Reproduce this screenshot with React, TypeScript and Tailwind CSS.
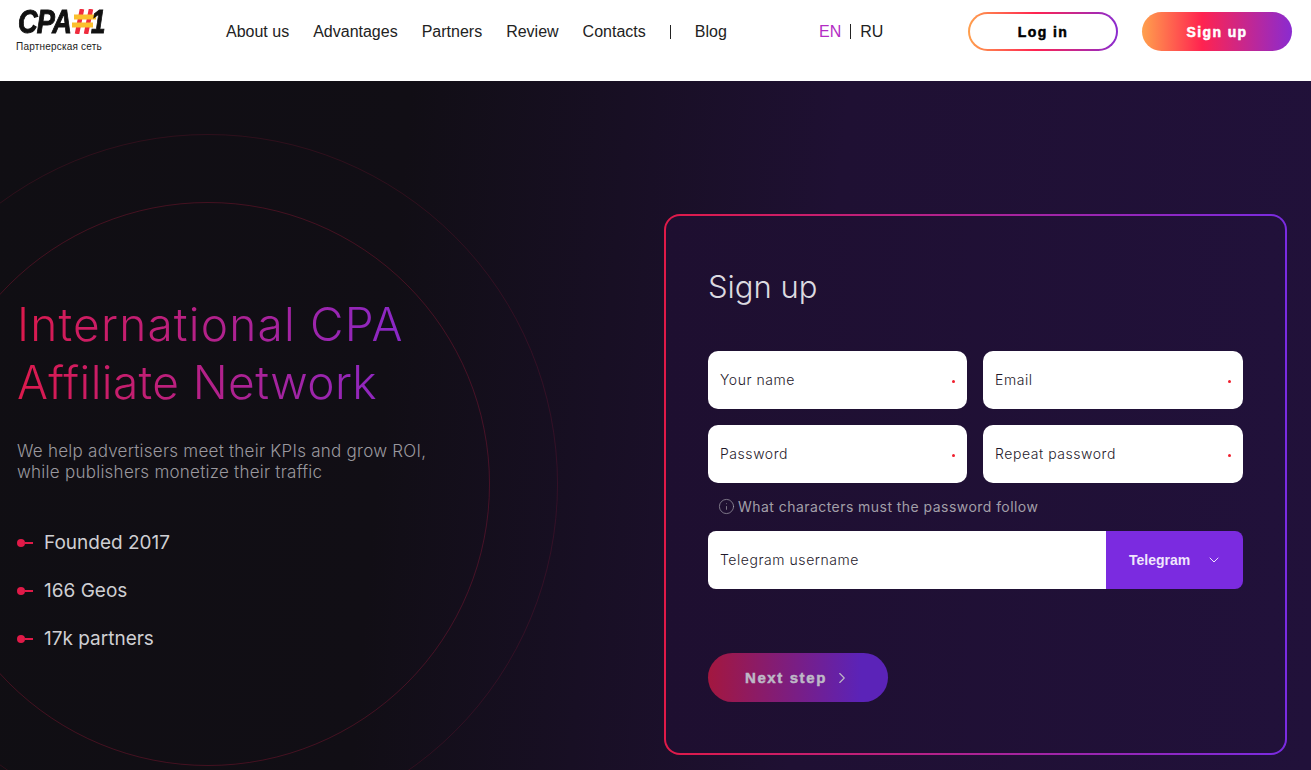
import { ChevronDown, ChevronRight, Info } from 'lucide-react';

const navItems = ['About us', 'Advantages', 'Partners', 'Review', 'Contacts'];
const stats = ['Founded 2017', '166 Geos', '17k partners'];

function Logo() {
  return (
    <div className="w-[226px] shrink-0 pt-[6px] pl-[16px]">
      <div className="flex h-[30px] items-center font-['Liberation_Sans',sans-serif] text-[34px] leading-none font-bold italic text-[#111]">
        <span className="ml-[2px] inline-block w-[54px] origin-left scale-x-[0.8] tracking-[-1px] [-webkit-text-stroke:1px_currentColor]">CPA</span>
        {/* the hash in the logo is two-tone */}
        <svg width="24" height="25" viewBox="0 0 24 25">
          <path d="M10 0 5 25M19 0 14 25" stroke="#ef2b3d" strokeWidth="4.5" />
          <path d="M2 8h22M0 16h21" stroke="#fbc02d" strokeWidth="5" />
        </svg>
        <span className="-ml-[5px] inline-block w-[12px] origin-left scale-x-[0.76] [-webkit-text-stroke:1px_currentColor]">1</span>
      </div>
      <p className="mt-[5px] font-['Liberation_Sans',sans-serif] text-[10px] leading-[12px] tracking-[0.2px] text-[#222]">Партнерская сеть</p>
    </div>
  );
}

function Header() {
  return (
    <header className="flex h-[81px] items-start bg-white font-['Liberation_Sans',sans-serif] text-[16px] text-[#222]">
      <Logo />
      <nav className="flex h-[63px] w-[593px] shrink-0 items-center gap-[24px]">
        {navItems.map((item) => (
          <a key={item}>{item}</a>
        ))}
        <span className="h-[14px] w-px bg-[#222]" />
        <a>Blog</a>
      </nav>
      <div className="flex h-[63px] w-[149px] shrink-0 items-center gap-[9px]">
        <span className="text-[#b32cc4]">EN</span>
        <span className="h-[15px] w-px bg-[#222]" />
        <span>RU</span>
      </div>
      <div className="mt-[12px] flex gap-[24px]">
        <button className="h-[39px] w-[150px] rounded-full border-2 border-transparent pt-[1px] text-[14px] font-bold tracking-[1.4px] text-black [-webkit-text-stroke:0.5px_currentColor] [background:linear-gradient(#fff,#fff)_padding-box,linear-gradient(90deg,#ffa04d,#ff2350_45%,#8a2bd0)_border-box]">
          Log in
        </button>
        <button className="h-[39px] w-[150px] rounded-full bg-[linear-gradient(90deg,#ffa04d,#ff2350_40%,#8a2bd0)] pt-[1px] text-[14px] font-bold tracking-[1.4px] text-white [-webkit-text-stroke:0.5px_currentColor]">
          Sign up
        </button>
      </div>
    </header>
  );
}

function Field({ label }: { label: string }) {
  return (
    <div className="flex h-[58px] items-center justify-between rounded-[10px] bg-white px-[12px] text-[14px] font-light tracking-[0.55px] text-[#1f1a2b]">
      <span className="pb-[2px]">{label}</span>
      <span className="mt-[2px] size-[3px] rounded-full bg-[#f01f2d]" />
    </div>
  );
}

function SignupCard() {
  return (
    <section className="h-[541px] w-[623px] rounded-[16px] border-2 border-transparent px-[42px] pt-[51px] [background:linear-gradient(90deg,#1e0f30,#21113a)_padding-box,linear-gradient(90deg,#e01a48,#7a2be2)_border-box]">
      <h2 className="text-[31px] leading-[40px] font-light text-[#dcdae0]">Sign up</h2>
      <div className="mt-[44px] grid grid-cols-[259px_260px] gap-x-[16px] gap-y-[16px]">
        <Field label="Your name" />
        <Field label="Email" />
        <Field label="Password" />
        <Field label="Repeat password" />
      </div>
      <p className="mt-[14px] flex h-[18px] items-center gap-[3px] pl-[10px] text-[14px] tracking-[0.45px] text-[#a29fa8]">
        <Info size={17} strokeWidth={1} />
        What characters must the password follow
      </p>
      <div className="mt-[16px] flex h-[58px] w-[535px] overflow-hidden rounded-[8px]">
        <div className="flex flex-1 items-center bg-white pb-[2px] pl-[12px] text-[14px] font-light tracking-[0.55px] text-[#1f1a2b]">Telegram username</div>
        <div className="flex w-[137px] items-center gap-[16px] bg-[#7b2be0] pl-[23px] font-['Liberation_Sans',sans-serif] text-[14px] font-bold text-[#f0e6fc]">
          Telegram
          <ChevronDown size={16} strokeWidth={1.5} />
        </div>
      </div>
      <button className="mt-[64px] flex h-[49px] w-[180px] items-center gap-[6px] rounded-full bg-[linear-gradient(90deg,#a3173f,#5b23b8_85%)] pl-[37px] font-['Liberation_Sans',sans-serif] text-[15px] font-bold tracking-[1.6px] text-[#bdb9c6] [-webkit-text-stroke:0.5px_currentColor]">
        <span className="pt-[1px]">Next step</span>
        <ChevronRight size={18} strokeWidth={1.5} />
      </button>
    </section>
  );
}

export default function App() {
  return (
    <div className="h-[770px] w-full overflow-hidden bg-white font-['Inter',sans-serif]">
      <Header />
      <main className="relative flex h-[689px] overflow-hidden bg-[linear-gradient(95deg,#100e13_0%,#110e15_30%,#1f1033_62%,#21113a_100%)]">
        <div className="absolute top-[53px] left-[-142px] size-[700px] rounded-full border border-[#e01a48]/15" />
        <div className="absolute top-[121px] left-[-74px] size-[564px] rounded-full border border-[#e01a48]/25" />
        <div className="relative w-[664px] shrink-0 pt-[214px] pl-[17px]">
          <h1 className="w-fit bg-[linear-gradient(90deg,#dc1a4c,#8a28c8)] bg-clip-text text-[46px] leading-[58px] font-light text-transparent">
            <span className="tracking-[1.2px]">International CPA</span>
            <br />
            <span className="tracking-[0.4px]">Affiliate Network</span>
          </h1>
          <p className="mt-[30px] text-[17px] leading-[21px] font-light tracking-[0.25px] text-[#9a989e]">
            We help advertisers meet their KPIs and grow ROI,
            <br />
            while publishers monetize their traffic
          </p>
          <ul className="mt-[48px] flex flex-col gap-[24px]">
            {stats.map((stat) => (
              <li key={stat} className="flex h-[24px] items-center text-[19px] text-[#cfcfd3]">
                <span className="size-[8px] rounded-full bg-[#e01a48]" />
                <span className="mr-[11px] h-[2px] w-[8px] bg-[#e01a48]" />
                {stat}
              </li>
            ))}
          </ul>
        </div>
        <div className="relative pt-[133px]">
          <SignupCard />
        </div>
      </main>
    </div>
  );
}
